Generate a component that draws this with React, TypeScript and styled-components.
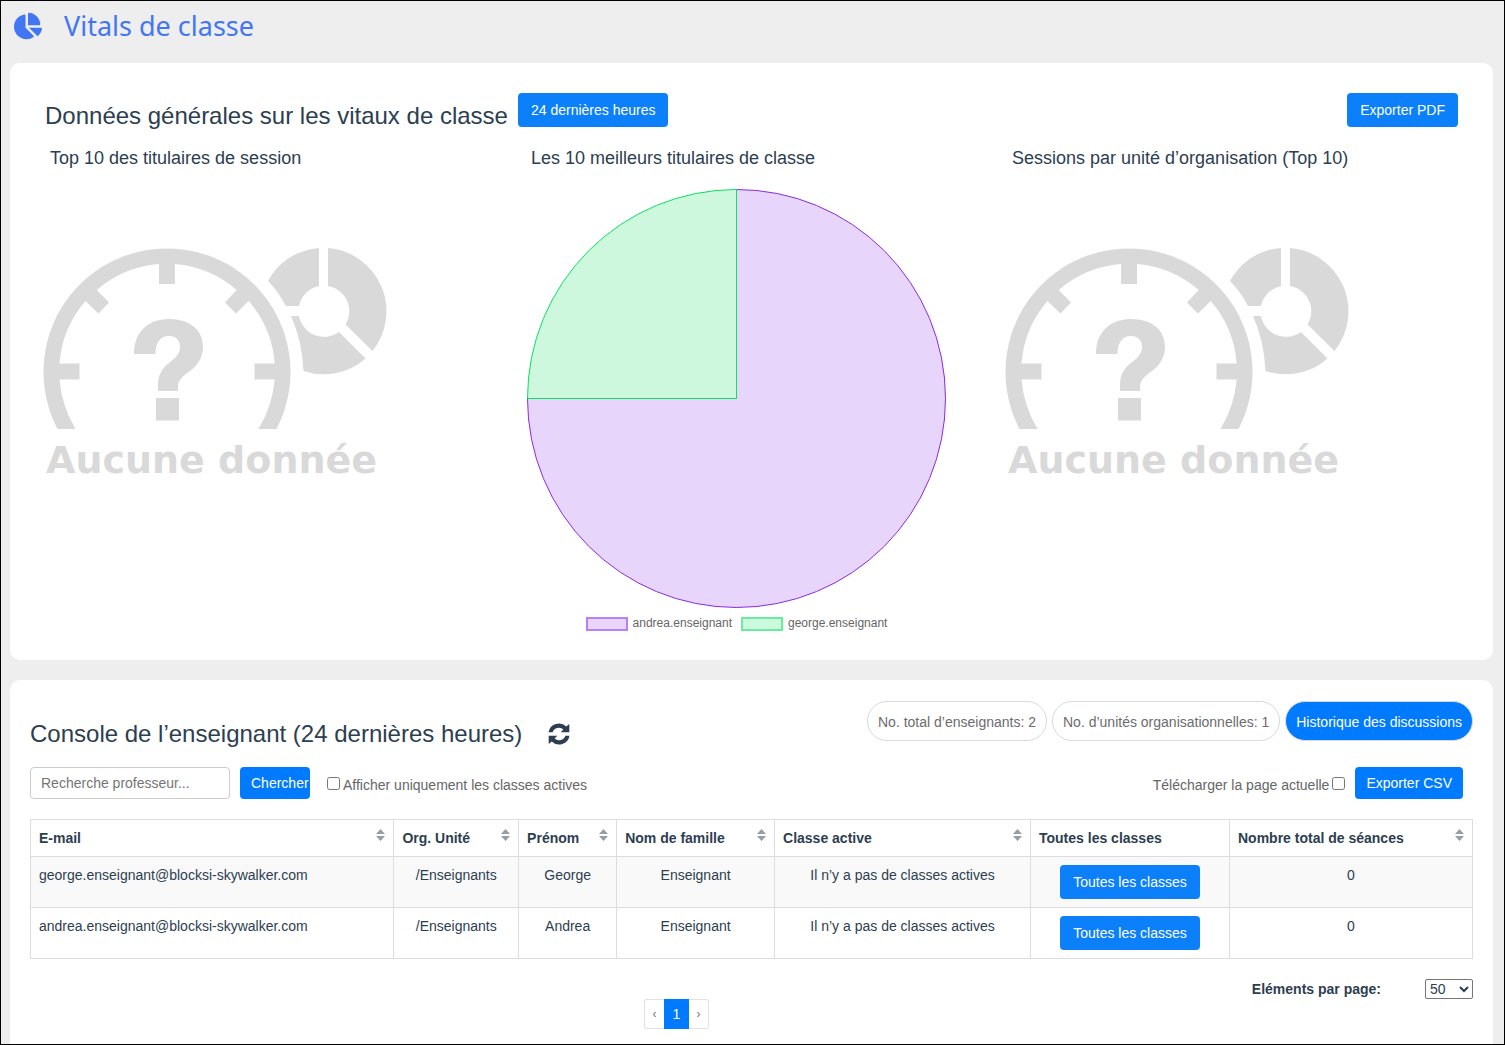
import React, { useState } from "react";
import styled, { createGlobalStyle } from "styled-components";
import { FaChartPie } from "react-icons/fa";

const GlobalStyle = createGlobalStyle`
  *, *::before, *::after { box-sizing: border-box; }
  body {
    margin: 0;
    background: #eee;
    color: #2c3e50;
    font: 14px/20px "Liberation Sans", Arial, sans-serif;
  }
  h1, h2, h3 { margin: 0; font-weight: 400; }
  button, input, select { font: inherit; }
`;

const Page = styled.div`
  display: flex;
  flex-direction: column;
  min-height: 100vh;
  border: 1px solid #000;
  padding: 0 11px 0 9px;
`;

const PageHeader = styled.header`
  display: flex;
  align-items: center;
  gap: 22px;
  height: 50px;
  margin-bottom: 12px;
  padding-left: 4px;
  color: #4376f4;
`;

const PageTitle = styled.h1`
  font: 400 27px/36px "Noto Sans", "Open Sans", sans-serif;
`;

const Main = styled.main`
  display: flex;
  flex: 1;
  flex-direction: column;
  gap: 20px;
`;

const Card = styled.section`
  background: #fff;
  border-radius: 10px;
  padding: 30px 20px 28px;
`;

const ConsoleCard = styled(Card)`
  flex: 1;
  padding: 21px 20px 15px;
  border-radius: 10px 10px 0 0;
`;

const OverviewBar = styled.div`
  display: flex;
  align-items: flex-start;
  gap: 10px;
  padding: 0 15px;
`;

const SectionTitle = styled.h2`
  font-size: 24px;
  line-height: 28px;
`;

const OverviewTitle = styled(SectionTitle)`
  padding-top: 9px;
`;

const Button = styled.button<{ $small?: boolean }>`
  height: ${(p) => (p.$small ? 32 : 34)}px;
  padding: 0 ${(p) => (p.$small ? 11 : 13)}px;
  border: 0;
  border-radius: 4px;
  background: ${(p) => (p.$small ? "#007bff" : "#0c80fb")};
  color: #fff;
  white-space: nowrap;
  cursor: pointer;
`;

const PushRight = styled.div`
  margin-left: auto;
`;

const Panels = styled.div`
  display: grid;
  grid-template-columns: repeat(3, 1fr);
  margin-top: 16px;
`;

const PanelTitle = styled.h3`
  padding-left: 20px;
  font-size: 18px;
  line-height: 24px;
`;

const PieFigure = styled.figure`
  margin: 18px 45px 0 15px;
  svg { display: block; width: 100%; height: auto; }
`;

const Legend = styled.ul`
  display: flex;
  justify-content: center;
  gap: 9px;
  margin: 6px 0 0;
  padding: 0 0 1px;
  list-style: none;
  color: #666;
  font-size: 12px;
  line-height: 16px;
`;

const LegendItem = styled.li`
  display: flex;
  align-items: center;
  gap: 5px;
`;

const Swatch = styled.span<{ $fill: string; $line: string }>`
  width: 42px;
  height: 14px;
  margin-top: 2px;
  border: 2px solid ${(p) => p.$line};
  background: ${(p) => p.$fill};
`;

const EmptyFigure = styled.figure`
  width: 346px;
  margin: 77px 0 0 12px;
  color: #d9d9d9;
  svg { display: block; }
`;

const EmptyCaption = styled.figcaption`
  padding-left: 4px;
  font: 700 38px/60px "DejaVu Sans", sans-serif;
  white-space: nowrap;
`;

const ConsoleHead = styled.div`
  display: flex;
  justify-content: space-between;
  align-items: flex-start;
`;

const TitleGroup = styled.div`
  display: flex;
  align-items: center;
  gap: 26px;
  padding-top: 19px;
`;

const IconButton = styled.button`
  display: flex;
  padding: 0;
  border: 0;
  background: none;
  color: #2c3e50;
  cursor: pointer;
`;

const Pills = styled.div`
  display: flex;
  gap: 5px;
`;

const Pill = styled.span`
  height: 40px;
  padding: 0 10px;
  border: 1px solid #d9d9d9;
  border-radius: 20px;
  color: #6c6c6c;
  line-height: 40px;
  white-space: nowrap;
`;

const PillButton = styled(Pill).attrs({ as: "button" })`
  background: #007bff;
  color: #fff;
  cursor: pointer;
`;

const Toolbar = styled.div`
  display: flex;
  align-items: center;
  gap: 10px;
  margin-top: 19px;
  padding-right: 10px;
`;

const SearchInput = styled.input`
  width: 200px;
  height: 32px;
  padding: 0 10px;
  border: 1px solid #ccc;
  border-radius: 4px;
  color: #555;
  &::placeholder { color: #757575; }
`;

const SearchButton = styled(Button)`
  width: 70px;
  overflow: hidden;
  text-align: left;
`;

const CheckLabel = styled.label`
  display: flex;
  align-items: center;
  gap: 3px;
  color: #666;
  white-space: nowrap;
`;

const CheckText = styled.span`
  padding-top: 4px;
`;

const Checkbox = styled.input.attrs({ type: "checkbox" })`
  width: 13px;
  height: 13px;
  margin: 0;
`;

const FilterLabel = styled(CheckLabel)`
  margin: 0 auto 0 7px;
`;

const Table = styled.table`
  width: 100%;
  margin-top: 20px;
  border-collapse: collapse;
  table-layout: fixed;
`;

const HeadCell = styled.th<{ $width: number }>`
  width: ${(p) => p.$width}%;
  height: 37px;
  padding: 0 8px;
  border: 1px solid #ddd;
  text-align: left;
  white-space: nowrap;
`;

const HeadContent = styled.div`
  display: flex;
  justify-content: space-between;
`;

const Row = styled.tr`
  height: 51px;
  &:nth-child(odd) { background: #f9f9f9; }
`;

const Cell = styled.td<{ $left?: boolean }>`
  padding: 8px;
  border: 1px solid #ddd;
  text-align: ${(p) => (p.$left ? "left" : "center")};
  vertical-align: top;
  button { display: block; margin: 0 auto; }
`;

const PageSize = styled.div`
  display: flex;
  justify-content: flex-end;
  align-items: center;
  gap: 44px;
  margin-top: 20px;
  font-weight: 700;
`;

const PageSelect = styled.select`
  width: 48px;
  height: 20px;
  border: 1px solid #767676;
  border-radius: 2px;
  background: #fff;
  color: #2c3e50;
  font-weight: 400;
`;

const Pager = styled.nav`
  display: flex;
  justify-content: center;
  padding-right: 150px;
`;

const PageLink = styled.a<{ $active?: boolean }>`
  width: ${(p) => (p.$active ? 25 : 20)}px;
  height: 30px;
  border: 1px solid ${(p) => (p.$active ? "#007bff" : "#dee2e6")};
  background: ${(p) => (p.$active ? "#007bff" : "#fff")};
  color: ${(p) => (p.$active ? "#fff" : "#6c757d")};
  font-size: ${(p) => (p.$active ? 14 : 12)}px;
  line-height: 28px;
  text-align: center;
  text-decoration: none;
  &:first-child { border-right: 0; border-radius: 3px 0 0 3px; }
  &:last-child { border-left: 0; border-radius: 0 3px 3px 0; }
`;

function SortIcon() {
  return (
    <svg width="9" height="14" viewBox="0 0 9 14" fill="#959ea7" aria-hidden="true">
      <path d="M4.500 1 9 6H0zM4.500 13 0 8h9z" />
    </svg>
  );
}

function RefreshIcon() {
  return (
    <svg width="22" height="22" viewBox="0 0 22 22" fill="currentColor" aria-hidden="true">
      <path id="arc" d="M.5 9.300A10.600 10.600 0 0 1 18.300 3.500L21.300 1V9.300H12.800L15.300 6.500A6.600 6.600 0 0 0 4.600 9.300Z" />
      <path d="M21.500 12.700A10.600 10.600 0 0 1 3.700 18.500L.7 21V12.700H9.200L6.700 15.500A6.600 6.600 0 0 0 17.400 12.700Z" />
    </svg>
  );
}

function EmptyState() {
  return (
    <EmptyFigure>
      <svg width="346" height="183" viewBox="42 247 346 183" fill="currentColor" aria-hidden="true">
        <path d="M57.5 429A123.500 123.500 0 1 1 276.500 429H258.500A115 115 0 0 0 274.700 379.500H254.500V363.500H274.700A108 108 0 0 0 248.700 301L236 313.500 225 302.500 236.700 290A108 108 0 0 0 175 264V284H159V264A108 108 0 0 0 96.700 290L109 302.500 98.500 313.500 85.500 301A108 108 0 0 0 59.500 363.500H79.500V379.500H59.500A115 115 0 0 0 75.500 429Z" />
        <path d="M134 354C134 333 147 319 169 319C190 319 203 330 203 347C203 357 198 365 190 371C182 377 178 380 178 387V391H158V385C158 375 162 368 169 363C177 357 180 353 180 347C180 340 176 336 169 336C160 336 155.500 343 155.500 354ZM156 398H179V420.500H156Z" />
        <path d="M319 248V286A25.500 25.500 0 0 0 299 306H286Q278 291 268 281C279 261 297 250 319 248Z" />
        <path d="M328 248A63.500 63.500 0 0 1 372.500 351L345.500 324.500A25.500 25.500 0 0 0 328 286Z" />
        <path d="M291 316H299A25.500 25.500 0 0 0 339 332L365.500 358.500A63 63 0 0 1 303.500 371Q302 340 291 316Z" />
      </svg>
      <EmptyCaption>Aucune donnée</EmptyCaption>
    </EmptyFigure>
  );
}

function PieChart() {
  return (
    <PieFigure>
      <svg viewBox="0 0 421 421" role="img" aria-label="andrea.enseignant 75 %, george.enseignant 25 %">
        <path d="M210.500 210.500V1.500A209 209 0 1 1 1.500 210.500Z" fill="#e7d5fb" stroke="#8a2be2" />
        <path d="M210.500 210.500H1.500A209 209 0 0 1 210.500 1.500Z" fill="#cdf8de" stroke="#0be060" />
      </svg>
      <Legend>
        <LegendItem><Swatch $fill="#e7d5fb" $line="#b980f4" />andrea.enseignant</LegendItem>
        <LegendItem><Swatch $fill="#cdf8de" $line="#68ec9d" />george.enseignant</LegendItem>
      </Legend>
    </PieFigure>
  );
}

const columns = [
  { label: "E-mail", width: 25.2, sortable: true },
  { label: "Org. Unité", width: 8.65, sortable: true },
  { label: "Prénom", width: 6.8, sortable: true },
  { label: "Nom de famille", width: 10.95, sortable: true },
  { label: "Classe active", width: 17.75, sortable: true },
  { label: "Toutes les classes", width: 13.8, sortable: false },
  { label: "Nombre total de séances", width: 16.85, sortable: true },
];

const teachers = [
  { email: "george.enseignant@blocksi-skywalker.com", first: "George" },
  { email: "andrea.enseignant@blocksi-skywalker.com", first: "Andrea" },
];

export default function App() {
  const [pageSize, setPageSize] = useState("50");
  return (
    <>
      <GlobalStyle />
      <Page>
        <PageHeader>
          <FaChartPie size={28} aria-hidden="true" />
          <PageTitle>Vitals de classe</PageTitle>
        </PageHeader>
        <Main>
          <Card>
            <OverviewBar>
              <OverviewTitle>Données générales sur les vitaux de classe</OverviewTitle>
              <Button>24 dernières heures</Button>
              <PushRight><Button>Exporter PDF</Button></PushRight>
            </OverviewBar>
            <Panels>
              <div>
                <PanelTitle>Top 10 des titulaires de session</PanelTitle>
                <EmptyState />
              </div>
              <div>
                <PanelTitle>Les 10 meilleurs titulaires de classe</PanelTitle>
                <PieChart />
              </div>
              <div>
                <PanelTitle>Sessions par unité d’organisation (Top 10)</PanelTitle>
                <EmptyState />
              </div>
            </Panels>
          </Card>
          <ConsoleCard>
            <ConsoleHead>
              <TitleGroup>
                <SectionTitle>Console de l’enseignant (24 dernières heures)</SectionTitle>
                <IconButton aria-label="Actualiser"><RefreshIcon /></IconButton>
              </TitleGroup>
              <Pills>
                <Pill>No. total d’enseignants: 2</Pill>
                <Pill>No. d’unités organisationnelles: 1</Pill>
                <PillButton>Historique des discussions</PillButton>
              </Pills>
            </ConsoleHead>
            <Toolbar>
              <SearchInput aria-label="Recherche professeur" placeholder="Recherche professeur..." />
              <SearchButton $small>Chercher</SearchButton>
              <FilterLabel>
                <Checkbox />
                <CheckText>Afficher uniquement les classes actives</CheckText>
              </FilterLabel>
              <CheckLabel>
                <CheckText>Télécharger la page actuelle</CheckText>
                <Checkbox />
              </CheckLabel>
              <Button $small>Exporter CSV</Button>
            </Toolbar>
            <Table>
              <thead>
                <tr>
                  {columns.map((c) => (
                    <HeadCell key={c.label} $width={c.width} scope="col">
                      <HeadContent>{c.label}{c.sortable && <SortIcon />}</HeadContent>
                    </HeadCell>
                  ))}
                </tr>
              </thead>
              <tbody>
                {teachers.map((t) => (
                  <Row key={t.email}>
                    <Cell $left>{t.email}</Cell>
                    <Cell>/Enseignants</Cell>
                    <Cell>{t.first}</Cell>
                    <Cell>Enseignant</Cell>
                    <Cell>Il n’y a pas de classes actives</Cell>
                    <Cell><Button>Toutes les classes</Button></Cell>
                    <Cell>0</Cell>
                  </Row>
                ))}
              </tbody>
            </Table>
            <PageSize>
              <label htmlFor="page-size">Eléments par page:</label>
              <PageSelect id="page-size" value={pageSize} onChange={(e) => setPageSize(e.target.value)}>
                <option>10</option>
                <option>25</option>
                <option>50</option>
              </PageSelect>
            </PageSize>
            <Pager aria-label="Pagination">
              <PageLink href="#" aria-label="Page précédente">‹</PageLink>
              <PageLink href="#" $active aria-current="page">1</PageLink>
              <PageLink href="#" aria-label="Page suivante">›</PageLink>
            </Pager>
          </ConsoleCard>
        </Main>
      </Page>
    </>
  );
}
